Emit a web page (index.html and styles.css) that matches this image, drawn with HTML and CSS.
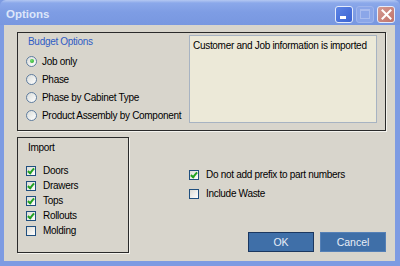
FILE: index.html
```html
<!DOCTYPE html>
<html lang="en">
  <head>
    <meta charset="UTF-8" />
    <title>Options</title>
    <link rel="stylesheet" href="styles.css">
  </head>
  <body>
    <div class="window">
      <!-- Title bar -->
      <div class="titlebar">
        <span class="title">Options</span>
        <div class="caption-buttons">
          <span class="cap-btn cap-min"><span class="min-bar"></span></span>
          <span class="cap-btn cap-max"><span class="max-box"></span></span>
          <span class="cap-btn cap-close">
            <svg width="11" height="11" viewBox="0 0 11 11">
              <path d="M1.5 1.5 L9.5 9.5 M9.5 1.5 L1.5 9.5" stroke="#fff" stroke-width="2" stroke-linecap="square" fill="none" />
            </svg>
          </span>
        </div>
      </div>

      <div class="client">
        <!-- Budget Options -->
        <div class="group budget">
          <div class="budget-left">
            <div class="caption">Budget Options</div>
            <div class="radio-list">
              <label class="row"><span class="radio checked"></span>Job only</label>
              <label class="row"><span class="radio"></span>Phase</label>
              <label class="row"><span class="radio"></span>Phase by Cabinet Type</label>
              <label class="row"><span class="radio"></span>Product Assembly by Component</label>
            </div>
          </div>
          <div class="info-box">Customer and Job information is imported</div>
        </div>

        <div class="bottom">
          <!-- Import -->
          <div class="group import">
            <div class="import-label">Import</div>
            <div class="check-list">
              <label class="row"><span class="check checked"></span>Doors</label>
              <label class="row"><span class="check checked"></span>Drawers</label>
              <label class="row"><span class="check checked"></span>Tops</label>
              <label class="row"><span class="check checked"></span>Rollouts</label>
              <label class="row"><span class="check"></span>Molding</label>
            </div>
          </div>

          <div class="right-col">
            <div class="extra-list">
              <label class="row"><span class="check checked"></span>Do not add prefix to part numbers</label>
              <label class="row"><span class="check"></span>Include Waste</label>
            </div>
            <div class="buttons">
              <button class="btn btn-default">OK</button>
              <button class="btn">Cancel</button>
            </div>
          </div>
        </div>
      </div>
    </div>
  </body>
</html>
```

FILE: styles.css
```css
body {
  margin: 0;
  font-family: "Liberation Sans", Arial, sans-serif;
  font-size: 10px;
  letter-spacing: -0.3px;
  color: #000000;
  background-color: #7b99e1;
}

.window {
  width: 400px;
  height: 266px;
  box-sizing: border-box;
  display: flex;
  flex-direction: column;
  background-color: #7b99e1;
  border-left: 4px solid #7d9be2;
  border-right: 5px solid #7d9be2;
  border-bottom: 5px solid #7d9be2;
}

/* Title bar */
.titlebar {
  height: 25px;
  margin: 0 -5px 0 -4px;
  padding: 0 5px 0 6px;
  display: flex;
  align-items: center;
  justify-content: space-between;
  background: linear-gradient(#b4c8f2 0, #8ba8ea 3px, #7e9de4 12px, #7897e0 100%);
  border-radius: 6px 6px 0 0;
}

.title {
  font-weight: bold;
  font-size: 11.5px;
  letter-spacing: 0;
  color: #dce6fa;
  padding-top: 2px;
}

.caption-buttons {
  display: flex;
  gap: 3px;
  padding-top: 3px;
}

.cap-btn {
  width: 16px;
  height: 15px;
  border-radius: 3px;
  border: 1px solid #e4ebfb;
  display: flex;
  align-items: center;
  justify-content: center;
}

.cap-min {
  background: linear-gradient(135deg, #5d85e6, #3a62d2);
  align-items: flex-end;
}

.min-bar {
  width: 6px;
  height: 3px;
  background-color: #ffffff;
  margin-bottom: 3px;
  margin-right: 3px;
}

.cap-max {
  background-color: #8ba6e8;
  border-color: #9fb5ec;
}

.max-box {
  width: 8px;
  height: 7px;
  border: 1px solid #a9bcee;
  border-top-width: 2px;
}

.cap-close {
  background: linear-gradient(135deg, #d49a92, #c0736a);
}

/* Client area */
.client {
  flex: 1;
  background-color: #d8d5cc;
  padding: 7px 9px 0 13px;
  display: flex;
  flex-direction: column;
}

.group {
  border: 1px solid #2a2a2a;
  box-shadow: 1px 1px 0 #f4f3ee;
  box-sizing: border-box;
}

.budget {
  height: 99px;
  display: flex;
  justify-content: space-between;
  padding: 2px 8px 7px 8px;
}

.caption {
  color: #2f5cc4;
  line-height: 14px;
  padding-left: 2px;
}

.radio-list {
  margin-top: 3px;
}

.row {
  display: flex;
  align-items: center;
  white-space: nowrap;
}

.radio-list .row {
  height: 18px;
}

.radio {
  width: 9px;
  height: 9px;
  border-radius: 50%;
  border: 1px solid #5f7d9f;
  background: linear-gradient(135deg, #d9dcd9, #ffffff);
  margin-right: 5px;
  display: flex;
  align-items: center;
  justify-content: center;
}

.radio.checked::after {
  content: "";
  width: 4px;
  height: 4px;
  border-radius: 50%;
  background: radial-gradient(circle at 40% 40%, #6ee06e, #21a121);
}

.info-box {
  width: 188px;
  box-sizing: border-box;
  background-color: #ece9d8;
  border: 1px solid #a7b3c2;
  padding: 3px 3px;
  line-height: 13px;
}

.bottom {
  margin-top: 6px;
  height: 116px;
  display: flex;
}

.import {
  width: 112px;
  padding: 3px 0 0 8px;
}

.import-label {
  line-height: 14px;
  padding-left: 2px;
}

.check-list {
  margin-top: 8px;
}

.check-list .row {
  height: 15px;
}

.check {
  width: 8px;
  height: 8px;
  border: 1px solid #1f4f7f;
  background: linear-gradient(135deg, #dcdcd6, #ffffff);
  margin-right: 7px;
  position: relative;
}

.check.checked::after {
  content: "";
  position: absolute;
  left: 2px;
  top: 0px;
  width: 2px;
  height: 5px;
  border: solid #21a121;
  border-width: 0 2px 2px 0;
  transform: rotate(40deg);
}

.right-col {
  flex: 1;
  display: flex;
  flex-direction: column;
  justify-content: space-between;
  margin-left: 60px;
}

.extra-list {
  padding-top: 28px;
}

.extra-list .row {
  height: 19px;
}

.buttons {
  display: flex;
  justify-content: flex-end;
  gap: 6px;
  margin-bottom: 1px;
}

.btn {
  width: 66px;
  height: 20px;
  box-sizing: border-box;
  font-family: "Liberation Sans", Arial, sans-serif;
  font-size: 10.5px;
  color: #e8eef7;
  background-color: #3f6fa8;
  border: 1px solid #5580b6;
  padding: 0;
}

.btn-default {
  border: 1px solid #1b3760;
}
```
